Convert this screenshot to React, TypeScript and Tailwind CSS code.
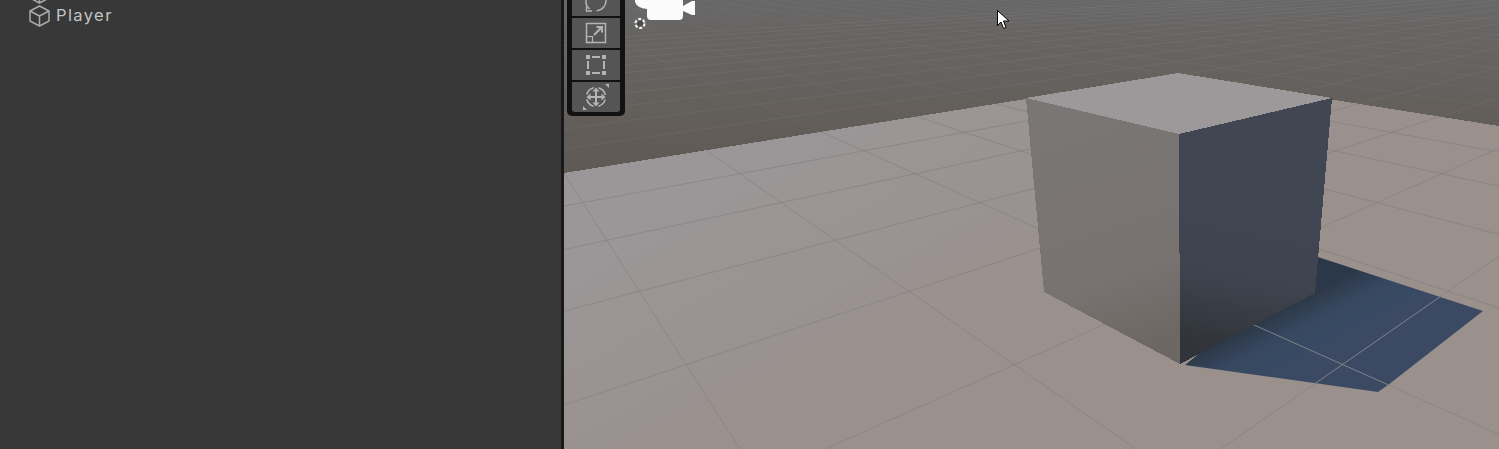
// Scene coordinates below are page pixels, so the svg viewBox starts at x=564.
const VA = { x: 425, y: -45 };
const VB = { x: 1934, y: -46 };
const REF_Y = 250;

function lineA(k: number) {
  const px = 613 + 236.5 * k;
  return { x1: VA.x, y1: VA.y, x2: VA.x + (px - VA.x) * 4, y2: VA.y + (REF_Y - VA.y) * 4 };
}

function lineB(k: number) {
  const px = 88.5 + 236.5 * k;
  return { x1: VB.x, y1: VB.y, x2: VB.x + (px - VB.x) * 4, y2: VB.y + (REF_Y - VB.y) * 4 };
}

function range(from: number, to: number) {
  const out: number[] = [];
  for (let i = from; i <= to; i++) out.push(i);
  return out;
}

function CubeIcon() {
  return (
    <svg width="21" height="22" viewBox="0 0 21 22" fill="none" stroke="#ababab" strokeWidth="1.5" strokeLinejoin="round">
      <path d="M10.5 1 L20 6 V16 L10.5 21 L1 16 V6 Z" />
      <path d="M1 6 L10.5 11 L20 6 M10.5 11 V21" />
    </svg>
  );
}

function ToolButton({ children, last }: { children: React.ReactNode; last?: boolean }) {
  return (
    <div className={`flex h-[30px] w-12 items-center justify-center bg-[#555555] ${last ? "rounded-b-[3px]" : ""}`}>
      {children}
    </div>
  );
}

function Toolbar() {
  return (
    <div className="absolute left-[3px] top-[-14px] flex flex-col gap-[2px] rounded-b-[5px] bg-[#121212] px-[5px] pb-1">
      <ToolButton>
        <svg width="24" height="24" viewBox="0 0 24 24" fill="none" stroke="#b4b4b4" strokeWidth="1.5">
          <path d="M2 11 A10 10 0 0 0 5.5 20" />
          <path d="M22 11 A10 10 0 0 1 12.7 21.7" />
          <path d="M2.5 17.5 V22 H8" />
        </svg>
      </ToolButton>
      <ToolButton>
        <svg width="22" height="22" viewBox="0 0 22 22" fill="none" stroke="#b4b4b4" strokeWidth="1.5">
          <rect x="1.5" y="1.5" width="19" height="19" />
          <rect x="1.5" y="14.5" width="6" height="6" strokeWidth="1.2" />
          <path d="M9 13 L17 5 M11.5 5 H17 V10.5" strokeWidth="2" />
        </svg>
      </ToolButton>
      <ToolButton>
        <svg width="20" height="20" viewBox="0 0 20 20" fill="#b4b4b4">
          <rect x="0" y="0" width="4" height="4" />
          <rect x="16" y="0" width="4" height="4" />
          <rect x="0" y="16" width="4" height="4" />
          <rect x="16" y="16" width="4" height="4" />
          <rect x="6" y="1" width="8" height="2" />
          <rect x="6" y="17" width="8" height="2" />
          <rect x="1" y="6" width="2" height="8" />
          <rect x="17" y="6" width="2" height="8" />
        </svg>
      </ToolButton>
      <ToolButton last>
        <svg width="28" height="28" viewBox="0 0 28 28" fill="none" stroke="#b4b4b4">
          <circle cx="14" cy="14" r="9.5" strokeWidth="1.6" strokeDasharray="10 4.92" strokeDashoffset="-2.46" />
          <path d="M14 7 V21 M7 14 H21" strokeWidth="2" />
          <path d="M14 4.5 L10.5 8.5 H17.5 Z M14 23.5 L10.5 19.5 H17.5 Z M4.5 14 L8.5 10.5 V17.5 Z M23.5 14 L19.5 10.5 V17.5 Z" fill="#b4b4b4" stroke="none" />
          <path d="M1 27 V23 L5 27 Z M27 1 V5 L23 1 Z" fill="#b4b4b4" stroke="none" />
        </svg>
      </ToolButton>
    </div>
  );
}

function Scene() {
  return (
    <svg className="block h-full w-full" viewBox="564 0 935 449" preserveAspectRatio="none">
      <defs>
        <linearGradient id="sky" gradientUnits="userSpaceOnUse" x1="0" y1="0" x2="0" y2="175">
          <stop offset="0" stopColor="#676767" />
          <stop offset="0.4" stopColor="#66625f" />
          <stop offset="1" stopColor="#5e5954" />
        </linearGradient>
        <linearGradient id="plane" gradientUnits="userSpaceOnUse" x1="800" y1="90" x2="1000" y2="449">
          <stop offset="0" stopColor="#9b9799" />
          <stop offset="0.5" stopColor="#9a9290" />
          <stop offset="1" stopColor="#9a908c" />
        </linearGradient>
        <linearGradient id="leftFace" gradientUnits="userSpaceOnUse" x1="1060" y1="100" x2="1140" y2="350">
          <stop offset="0" stopColor="#7a7675" />
          <stop offset="0.7" stopColor="#787370" />
          <stop offset="1" stopColor="#6c6763" />
        </linearGradient>
        <linearGradient id="rightFace" gradientUnits="userSpaceOnUse" x1="1270" y1="200" x2="1240" y2="350">
          <stop offset="0" stopColor="#404753" />
          <stop offset="0.55" stopColor="#3e444e" />
          <stop offset="1" stopColor="#31343a" />
        </linearGradient>
        <linearGradient id="shadow" gradientUnits="userSpaceOnUse" x1="1247" y1="328" x2="1272" y2="375">
          <stop offset="0" stopColor="#2c3848" />
          <stop offset="0.45" stopColor="#374760" />
          <stop offset="1" stopColor="#3a4a64" />
        </linearGradient>
        <clipPath id="planeClip">
          <polygon points="564,173 1176,75 1499,126 1499,449 564,449" />
        </clipPath>
        <clipPath id="shadowClip">
          <polygon points="1185,365 1318,257 1483,311 1388,385 1378,392" />
        </clipPath>
        <filter id="soft" x="-20%" y="-20%" width="140%" height="140%">
          <feGaussianBlur stdDeviation="0.6" />
        </filter>
      </defs>

      <rect x="564" y="0" width="935" height="449" fill="url(#sky)" />
      {range(-30, 7).map((k) => (
        <line key={`bb${k}`} {...lineB(k)} stroke="#ffffff" strokeOpacity={k < -12 ? 0.015 : 0.05} />
      ))}
      {range(0, 40).map((k) => (
        <line key={`ba${k}`} {...lineA(k)} stroke="#ffffff" strokeOpacity={k > 20 ? 0.015 : 0.035} />
      ))}

      <polygon points="564,173 1176,75 1499,126 1499,449 564,449" fill="url(#plane)" shapeRendering="crispEdges" />
      <g clipPath="url(#planeClip)">
        {range(0, 6).map((k) => (
          <line key={`pa${k}`} {...lineA(k)} stroke="#7b7775" strokeOpacity="0.45" />
        ))}
        {range(1, 6).map((k) => (
          <line key={`pb${k}`} {...lineB(k)} stroke="#7b7775" strokeOpacity="0.45" />
        ))}
      </g>

      <polygon points="1185,365 1318,257 1483,311 1388,385 1378,392" fill="url(#shadow)" filter="url(#soft)" />
      <g clipPath="url(#shadowClip)">
        {range(2, 3).map((k) => (
          <line key={`sa${k}`} {...lineA(k)} stroke="#8f9293" strokeOpacity="0.8" />
        ))}
        <line {...lineB(6)} stroke="#8f9293" strokeOpacity="0.8" />
      </g>

      <g shapeRendering="crispEdges">
        <polygon points="1026,98 1179,134 1180,364 1044,292" fill="url(#leftFace)" />
        <polygon points="1179,134 1332,98 1315,293 1180,364" fill="url(#rightFace)" />
        <polygon points="1026,98 1178,73 1332,98 1179,134" fill="#9d999a" />
      </g>

      <path d="M635 -2 L635 2 Q637 8 647 9 L647 16 Q647 20 651 20 L679 20 Q683 20 683 16 L683 11 L692 15 L695 15 L695 1 L692 1 L683 6 L683 -2 Z" fill="#fbfbfb" />
      <circle cx="640" cy="23.5" r="3" fill="#3a3a3a" fillOpacity="0.6" />
      <circle cx="640" cy="23.5" r="4.5" fill="none" stroke="#f2f2f2" strokeWidth="2.2" strokeDasharray="3 1.7" />
      <path d="M997.5 10.5 L997.5 25.5 L1001 22 L1003.5 28.5 L1006 27.5 L1003.5 21 L1009 21 Z" fill="#ffffff" stroke="#000000" strokeWidth="1" />
    </svg>
  );
}

export default function App() {
  return (
    <div className="flex h-[449px] w-full overflow-hidden bg-[#383838] font-['Inter',sans-serif]">
      <aside className="w-[561px] shrink-0 overflow-hidden bg-[#383838] pl-[29px]">
        <div className="mt-[-19px] flex flex-col">
          <div className="flex h-[23px] items-center">
            <CubeIcon />
          </div>
          <div className="flex h-[23px] items-center gap-[6px]">
            <CubeIcon />
            <span className="text-[16.5px] tracking-[1.4px] text-[#c4c4c4]">Player</span>
          </div>
        </div>
      </aside>
      <div className="w-[3px] shrink-0 bg-[#191919]" />
      <main className="relative min-w-0 flex-1 overflow-hidden">
        <Scene />
        <Toolbar />
      </main>
    </div>
  );
}
